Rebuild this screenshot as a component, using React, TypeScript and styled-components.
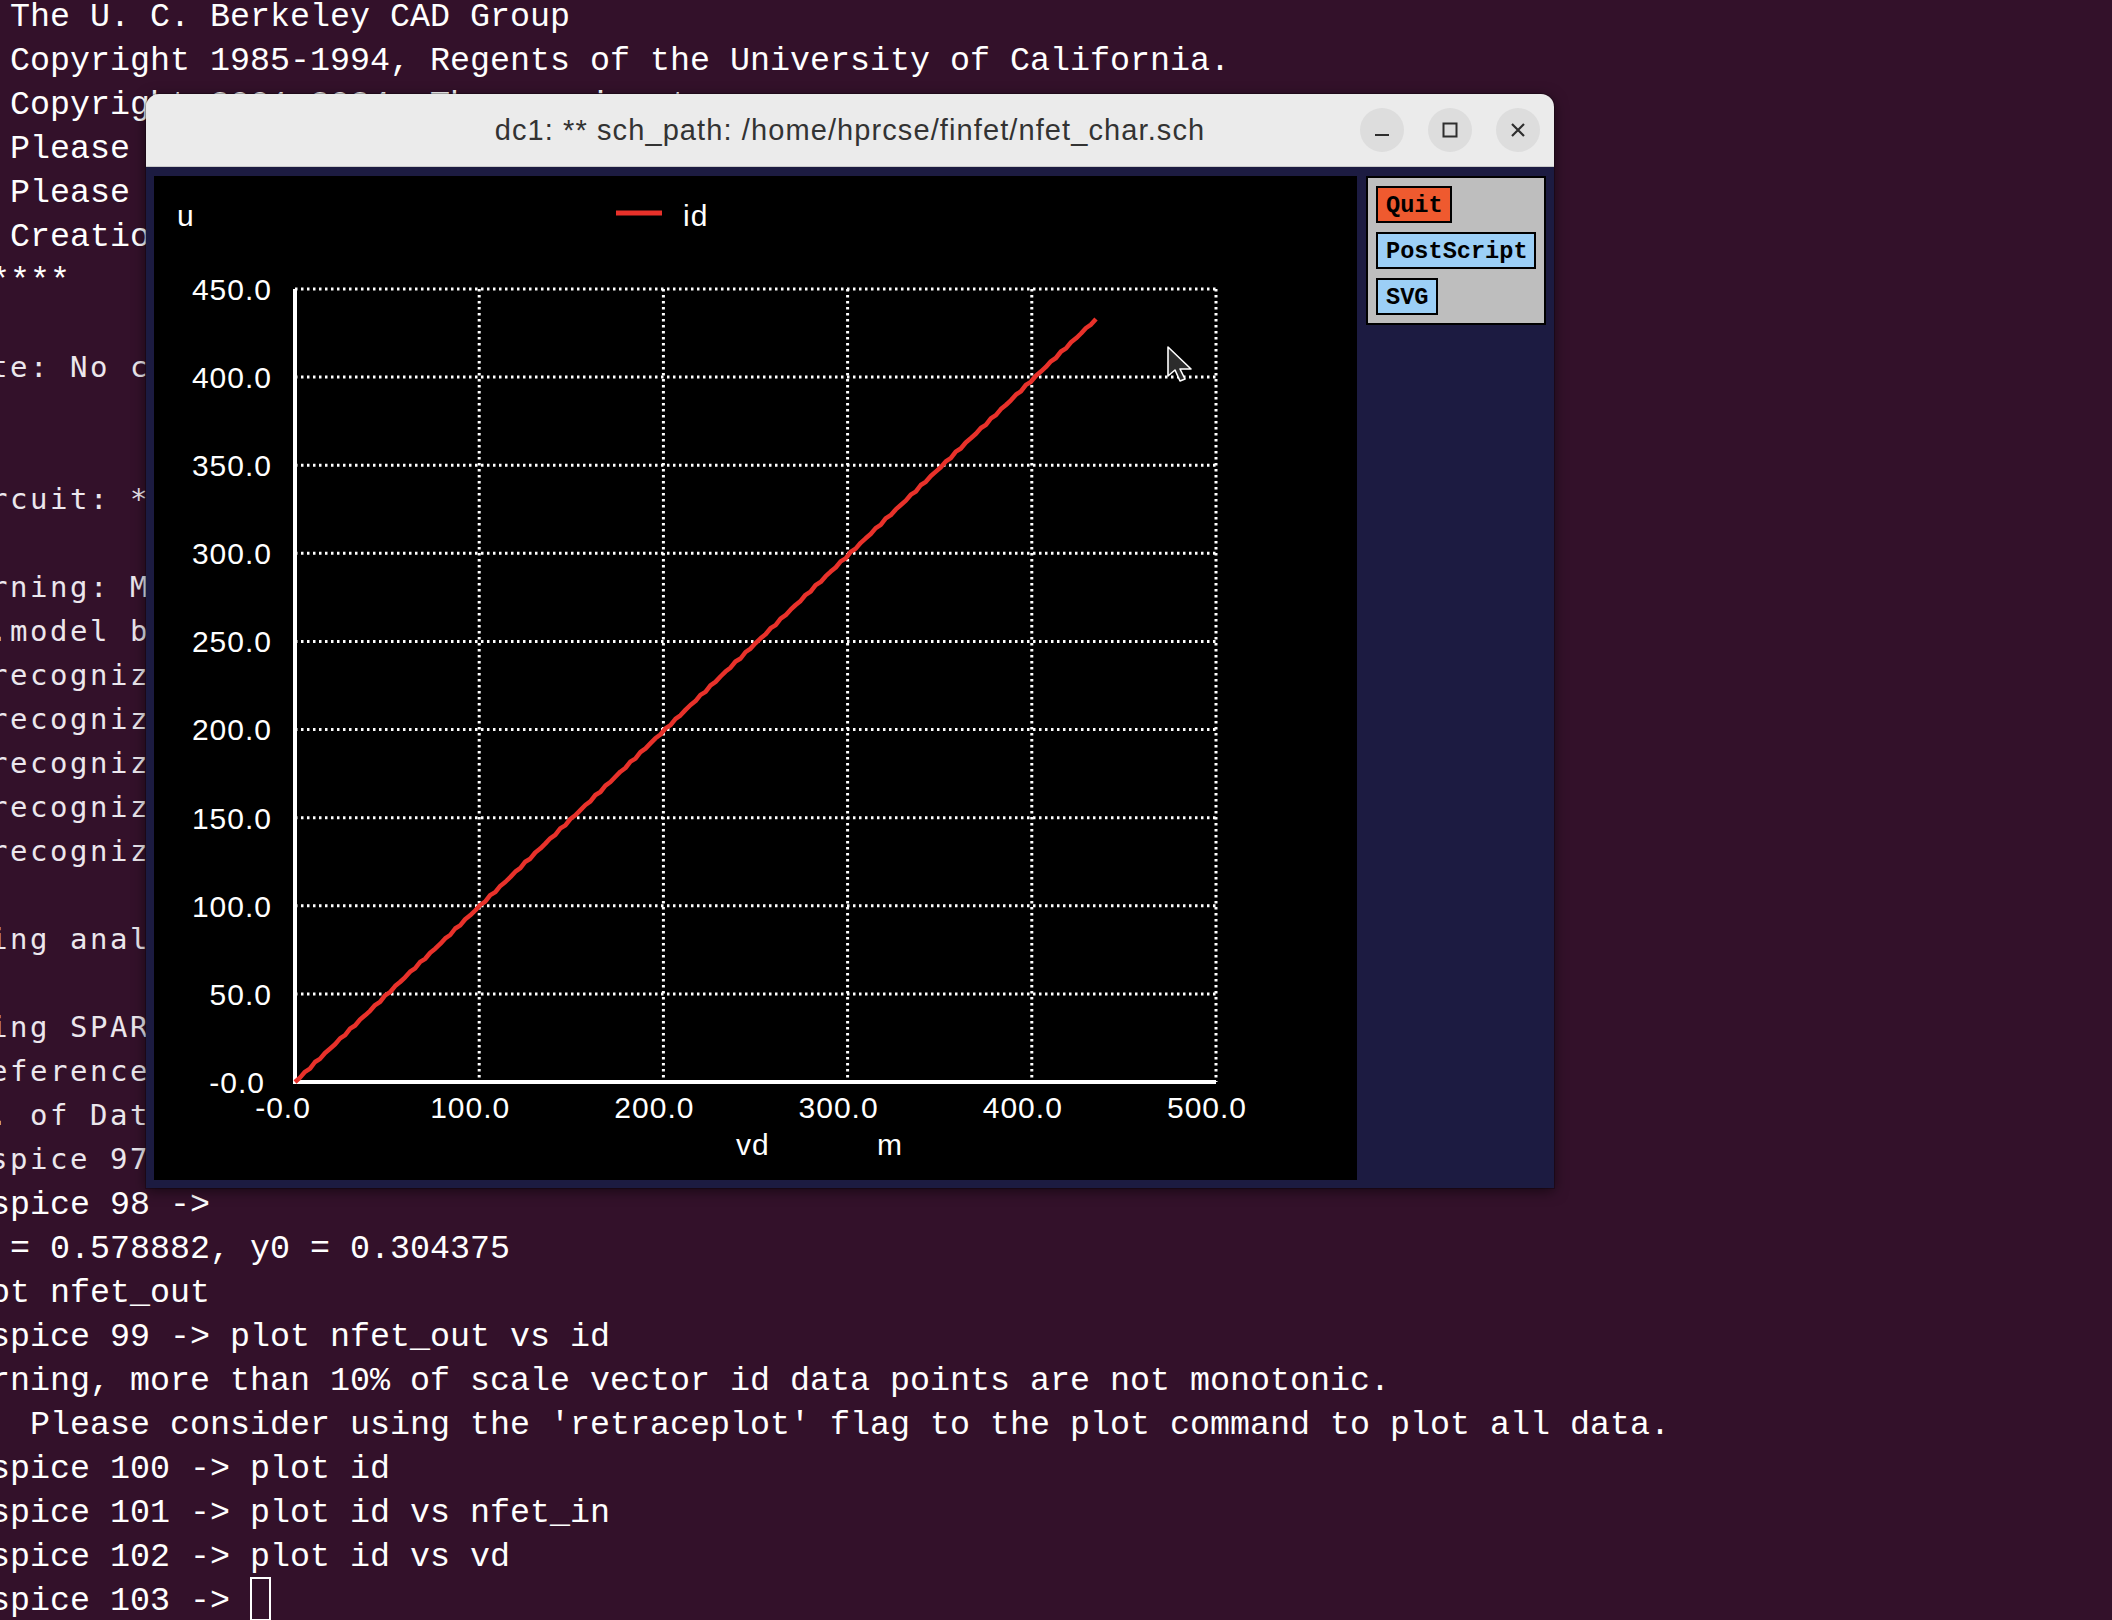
import React from "react";
import styled, { createGlobalStyle } from "styled-components";

const Global = createGlobalStyle`
  html, body {
    margin: 0;
    padding: 0;
    background: #33112a;
    width: 2112px;
    height: 1620px;
    overflow: hidden;
  }
`;

const Desktop = styled.div`
  position: relative;
  width: 2112px;
  height: 1620px;
  overflow: hidden;
  background: #33112a;
`;

const Terminal = styled.div`
  margin: -7px 0 0 -50px;
  color: #ffffff;
  white-space: pre;
`;

const TermLine = styled.div<{ $wide?: boolean }>`
  box-sizing: border-box;
  height: 44px;
  padding-top: ${(p) => (p.$wide ? "0px" : "4px")};
  line-height: ${(p) => (p.$wide ? "44px" : "40px")};
  font-family: ${(p) => (p.$wide ? '"DejaVu Sans Mono"' : '"Liberation Mono"')}, monospace;
  font-size: ${(p) => (p.$wide ? "29px" : "33.33px")};
  letter-spacing: ${(p) => (p.$wide ? "2.54px" : "0px")};
  color: ${(p) => (p.$wide ? "#ece7ed" : "#ffffff")};
`;

const TermCursor = styled.span`
  display: inline-block;
  box-sizing: border-box;
  width: 21px;
  height: 44px;
  margin-top: -4px;
  border: 2px solid #ffffff;
  vertical-align: top;
`;

const Window = styled.div`
  position: absolute;
  left: 146px;
  top: 94px;
  width: 1408px;
  display: flex;
  flex-direction: column;
  border-radius: 13px 13px 0 0;
  overflow: hidden;
  box-shadow: 0 3px 14px rgba(0, 0, 0, 0.55), 0 0 0 1px rgba(0, 0, 0, 0.25);
`;

const TitleBar = styled.div`
  height: 72px;
  background: #ebebeb;
  border-bottom: 1px solid #c9c9c9;
  display: grid;
  grid-template-columns: 1fr auto 1fr;
  align-items: center;
`;

const Title = styled.div`
  grid-column: 2;
  font-family: "Liberation Sans", Arial, sans-serif;
  font-size: 29px;
  letter-spacing: 1.1px;
  color: #333333;
`;

const Controls = styled.div`
  grid-column: 3;
  justify-self: end;
  display: flex;
  gap: 24px;
  padding-right: 14px;
`;

const CtrlButton = styled.div`
  width: 44px;
  height: 44px;
  border-radius: 50%;
  background: #dddddd;
  display: flex;
  align-items: center;
  justify-content: center;
`;

const Body = styled.div`
  background: #1c1b41;
  display: flex;
  align-items: flex-start;
  padding: 9px 8px 8px 8px;
  gap: 9px;
`;

const PlotArea = styled.div`
  position: relative;
  width: 1203px;
  height: 1004px;
  background: #000000;
  flex: none;
`;

const SidePanel = styled.div`
  width: 180px;
  box-sizing: border-box;
  background: #bebebe;
  border: 2px solid #000000;
  padding: 8px;
  display: flex;
  flex-direction: column;
  align-items: flex-start;
  gap: 9px;
`;

const PanelButton = styled.div<{ $bg: string; $w: number }>`
  box-sizing: border-box;
  width: ${(p) => p.$w}px;
  height: 37px;
  background: ${(p) => p.$bg};
  border: 2px solid #000000;
  padding-left: 8px;
  font-family: "Liberation Mono", monospace;
  font-weight: bold;
  font-size: 23.6px;
  line-height: 35px;
  color: #000000;
`;

const PlotSvg = styled.svg`
  display: block;
`;

const lines: { t: string; wide?: boolean; cursor?: boolean }[] = [
  { t: "** The U. C. Berkeley CAD Group" },
  { t: "** Copyright 1985-1994, Regents of the University of California." },
  { t: "** Copyright 2001-2024, The ngspice team." },
  { t: "** Please get your ngspice manual from https://ngspice.sourceforge.io/docs.html" },
  { t: "** Please file your bug-reports at https://ngspice.sourceforge.io/bugrep.html" },
  { t: "** Creation Date: Mon Jan  1 00:00:00 UTC 2024" },
  { t: "******" },
  { t: "" },
  { t: "Note: No compatibility mode selected!", wide: true },
  { t: "", wide: true },
  { t: "", wide: true },
  { t: "Circuit: ** sch_path: /home/hprcse/finfet/nfet_char.sch", wide: true },
  { t: "", wide: true },
  { t: "Warning: Model issue on line 0", wide: true },
  { t: "  .model bsimcmg_osdi_n bsimcmg_va", wide: true },
  { t: "Unrecognized parameter (devtype) - ignored", wide: true },
  { t: "Unrecognized parameter (geomod) - ignored", wide: true },
  { t: "Unrecognized parameter (nfin) - ignored", wide: true },
  { t: "Unrecognized parameter (tfin) - ignored", wide: true },
  { t: "Unrecognized parameter (hfin) - ignored", wide: true },
  { t: "", wide: true },
  { t: "Doing analysis at TEMP = 27.000000 and TNOM = 27.000000", wide: true },
  { t: "", wide: true },
  { t: "Using SPARSE 1.3 as Direct Linear Solver", wide: true },
  { t: " Reference value :  0.00000e+00", wide: true },
  { t: "No. of Data Rows : 1001", wide: true },
  { t: "ngspice 97 -> ", wide: true },
  { t: "ngspice 98 -> " },
  { t: "x0 = 0.578882, y0 = 0.304375" },
  { t: "plot nfet_out" },
  { t: "ngspice 99 -> plot nfet_out vs id" },
  { t: "Warning, more than 10% of scale vector id data points are not monotonic." },
  { t: "    Please consider using the 'retraceplot' flag to the plot command to plot all data." },
  { t: "ngspice 100 -> plot id" },
  { t: "ngspice 101 -> plot id vs nfet_in" },
  { t: "ngspice 102 -> plot id vs vd" },
  { t: "ngspice 103 -> ", cursor: true },
];

// plot geometry (relative to black plot area)
const X0 = 141;
const X1 = 1062;
const Y0 = 906;
const Y1 = 113;
const xs = [0, 1, 2, 3, 4, 5].map((i) => X0 + ((X1 - X0) / 5) * i);
const ys = Array.from({ length: 10 }, (_, i) => Y0 - ((Y0 - Y1) / 9) * i);
const xLabels = ["-0.0", "100.0", "200.0", "300.0", "400.0", "500.0"];
const yLabels = ["-0.0", "50.0", "100.0", "150.0", "200.0", "250.0", "300.0", "350.0", "400.0", "450.0"];

const curve = (() => {
  const pts: string[] = [];
  const n = 160;
  const ex = 942;
  const ey = 143;
  for (let i = 0; i <= n; i++) {
    const f = i / n;
    const x = X0 + (ex - X0) * f;
    const j = Math.sin(i * 2.7) * 0.9;
    const y = Y0 + (ey - Y0) * f + (i > 0 && i < n ? j : 0);
    pts.push(`${x.toFixed(1)},${y.toFixed(1)}`);
  }
  return pts.join(" ");
})();

const labelFont = {
  fontFamily: '"Liberation Sans", Arial, sans-serif',
  fontSize: 30,
  letterSpacing: 1,
  fill: "#ffffff",
};

function Plot() {
  return (
    <PlotSvg width={1203} height={1004} viewBox="0 0 1203 1004">
      {/* grid */}
      {xs.slice(1).map((x) => (
        <line key={"vx" + x} x1={x} y1={Y1} x2={x} y2={Y0} stroke="#ffffff" strokeWidth={3} strokeDasharray="2.5 3.5" />
      ))}
      {ys.slice(1).map((y) => (
        <line key={"hy" + y} x1={X0} y1={y} x2={X1} y2={y} stroke="#ffffff" strokeWidth={3} strokeDasharray="2.5 3.5" />
      ))}
      {/* axes */}
      <line x1={X0} y1={Y1} x2={X0} y2={Y0 + 2} stroke="#ffffff" strokeWidth={4} />
      <line x1={X0} y1={Y0} x2={X1} y2={Y0} stroke="#ffffff" strokeWidth={4} />
      {/* curve */}
      <polyline points={curve} fill="none" stroke="#e8312a" strokeWidth={4.5} strokeLinejoin="round" />
      {/* y labels */}
      {yLabels.map((l, i) => (
        <text key={"yl" + i} x={i === 0 ? 111 : 118} y={ys[i] + 3} textAnchor="end" dominantBaseline="middle" {...labelFont}>
          {l}
        </text>
      ))}
      {/* x labels */}
      {xLabels.map((l, i) => (
        <text key={"xl" + i} x={xs[i] - (i === 0 ? 12 : 9)} y={934} textAnchor="middle" dominantBaseline="middle" {...labelFont}>
          {l}
        </text>
      ))}
      {/* unit & legend */}
      <text x={23} y={50} {...labelFont}>u</text>
      <line x1={462} y1={37} x2={508} y2={37} stroke="#e8312a" strokeWidth={5} />
      <text x={529} y={50} {...labelFont}>id</text>
      <text x={582} y={979} {...labelFont}>vd</text>
      <text x={723} y={979} {...labelFont}>m</text>
      {/* mouse pointer */}
      <g transform="translate(1014,171)">
        <path d="M0 0 V29 L7 23 L12 34 L17 32 L12 22 L23 22 Z" fill="#2c2c2c" stroke="#ffffff" strokeWidth={1.6} strokeLinejoin="round" />
      </g>
    </PlotSvg>
  );
}

export default function App() {
  return (
    <>
      <Global />
      <Desktop>
        <Terminal>
          {lines.map((l, i) => (
            <TermLine key={i} $wide={l.wide}>
              {l.t}
              {l.cursor && <TermCursor />}
            </TermLine>
          ))}
        </Terminal>
        <Window>
          <TitleBar>
            <Title>dc1: ** sch_path: /home/hprcse/finfet/nfet_char.sch</Title>
            <Controls>
              <CtrlButton>
                <svg width="18" height="18" viewBox="0 0 18 18">
                  <line x1="2" y1="14" x2="16" y2="14" stroke="#2e2e2e" strokeWidth="2" />
                </svg>
              </CtrlButton>
              <CtrlButton>
                <svg width="18" height="18" viewBox="0 0 18 18">
                  <rect x="2.5" y="2.5" width="13" height="13" fill="none" stroke="#2e2e2e" strokeWidth="2" />
                </svg>
              </CtrlButton>
              <CtrlButton>
                <svg width="18" height="18" viewBox="0 0 18 18">
                  <path d="M3 3 L15 15 M15 3 L3 15" stroke="#2e2e2e" strokeWidth="2.2" />
                </svg>
              </CtrlButton>
            </Controls>
          </TitleBar>
          <Body>
            <PlotArea>
              <Plot />
            </PlotArea>
            <SidePanel>
              <PanelButton $bg="#ef5a2f" $w={76}>Quit</PanelButton>
              <PanelButton $bg="#9ccff6" $w={160}>PostScript</PanelButton>
              <PanelButton $bg="#9ccff6" $w={62}>SVG</PanelButton>
            </SidePanel>
          </Body>
        </Window>
      </Desktop>
    </>
  );
}
